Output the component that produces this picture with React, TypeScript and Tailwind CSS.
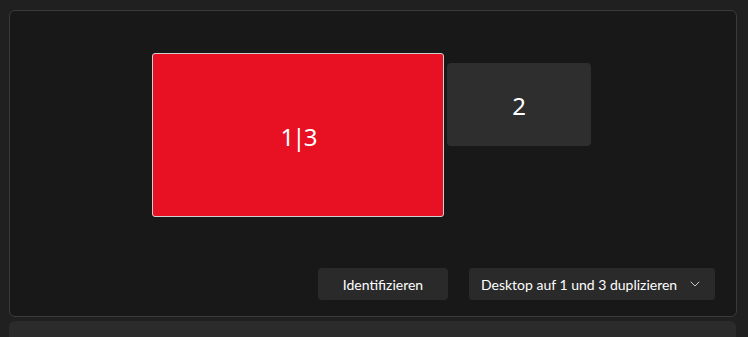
export default function App() {
  return (
    <div
      className="h-[337px] w-[748px] overflow-hidden bg-[#202020] px-[9px] pt-[10px] text-white"
      style={{ fontFamily: '"Noto Sans", "Open Sans", sans-serif' }}
    >
      {/* Display arrangement card */}
      <div className="h-[307px] w-[728px] rounded-[6px] border border-[#3a3a3a] bg-[#181818]">
        <div className="flex justify-center gap-[3px] pr-[3px] pt-[42px]">
          <div className="flex h-[164px] w-[292px] items-center justify-center rounded-[3px] border border-[#d0d0d0] bg-[#e81123] pt-[3px]">
            <span className="text-[24px] leading-none tracking-[-0.08em]">1|3</span>
          </div>
          <div className="mt-[10px] flex h-[83px] w-[144px] items-center justify-center rounded-[4px] bg-[#2e2e2e] pt-[3px]">
            <span className="text-[24px] leading-none">2</span>
          </div>
        </div>

        <div
          className="mt-[51px] flex justify-end gap-[21px] pr-[21px]"
          style={{ fontFamily: 'Lato, "Noto Sans", sans-serif' }}
        >
          <button className="h-[32px] w-[130px] whitespace-nowrap rounded-[4px] bg-[#2a2a2a] text-[14px]">
            Identifizieren
          </button>
          <button className="flex h-[32px] w-[246px] items-center justify-between whitespace-nowrap rounded-[4px] bg-[#2a2a2a] pl-[12px] pr-[15px] text-[14px]">
            <span>Desktop auf 1 und 3 duplizieren</span>
            <svg width="10" height="6" viewBox="0 0 10 6" fill="none">
              <path d="M1 1l4 4 4-4" stroke="#c8c8c8" strokeWidth="1" strokeLinecap="round" strokeLinejoin="round" />
            </svg>
          </button>
        </div>
      </div>

      {/* Next settings card */}
      <div className="mt-[4px] h-[40px] w-[727px] rounded-[6px] bg-[#2b2b2b]" />
    </div>
  );
}
